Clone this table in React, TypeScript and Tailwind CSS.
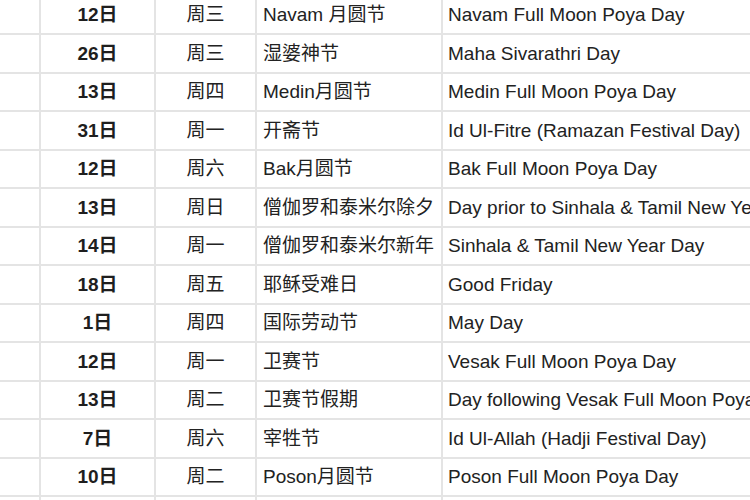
const rows = [
  { day: "12日", week: "周三", zh: "Navam 月圆节", en: "Navam Full Moon Poya Day" },
  { day: "26日", week: "周三", zh: "湿婆神节", en: "Maha Sivarathri Day" },
  { day: "13日", week: "周四", zh: "Medin月圆节", en: "Medin Full Moon Poya Day" },
  { day: "31日", week: "周一", zh: "开斋节", en: "Id Ul-Fitre (Ramazan Festival Day)" },
  { day: "12日", week: "周六", zh: "Bak月圆节", en: "Bak Full Moon Poya Day" },
  { day: "13日", week: "周日", zh: "僧伽罗和泰米尔除夕", en: "Day prior to Sinhala & Tamil New Year" },
  { day: "14日", week: "周一", zh: "僧伽罗和泰米尔新年", en: "Sinhala & Tamil New Year Day" },
  { day: "18日", week: "周五", zh: "耶稣受难日", en: "Good Friday" },
  { day: "1日", week: "周四", zh: "国际劳动节", en: "May Day" },
  { day: "12日", week: "周一", zh: "卫赛节", en: "Vesak Full Moon Poya Day" },
  { day: "13日", week: "周二", zh: "卫赛节假期", en: "Day following Vesak Full Moon Poya Day" },
  { day: "7日", week: "周六", zh: "宰牲节", en: "Id Ul-Allah (Hadji Festival Day)" },
  { day: "10日", week: "周二", zh: "Poson月圆节", en: "Poson Full Moon Poya Day" },
  { day: "", week: "", zh: "", en: "" },
];

export default function App() {
  return (
    <div className="w-[750px] h-[500px] overflow-hidden bg-white text-[#222] font-['Liberation_Sans','Noto_Sans_CJK_SC',sans-serif]">
      <div className="-mt-[3.5px]">
        {rows.map((r, i) => (
          <div key={i} className="flex h-[38.5px] border-b-2 border-[#e4e4e4] text-[19px] leading-none">
            <div className="w-[41px] shrink-0 border-r-2 border-[#e4e4e4]"></div>
            <div className="w-[115px] shrink-0 border-r-2 border-[#e4e4e4] flex items-center justify-center font-semibold text-[#1e1e1e]">
              {r.day}
            </div>
            <div className="w-[101px] shrink-0 border-r-2 border-[#e4e4e4] flex items-center justify-center">
              {r.week}
            </div>
            <div className="w-[186px] shrink-0 border-r-2 border-[#e4e4e4] flex items-center pl-[6px] whitespace-nowrap">
              {r.zh}
            </div>
            <div className="flex-1 min-w-0 flex items-center pl-[5px] whitespace-nowrap overflow-hidden">
              {r.en}
            </div>
          </div>
        ))}
      </div>
    </div>
  );
}
